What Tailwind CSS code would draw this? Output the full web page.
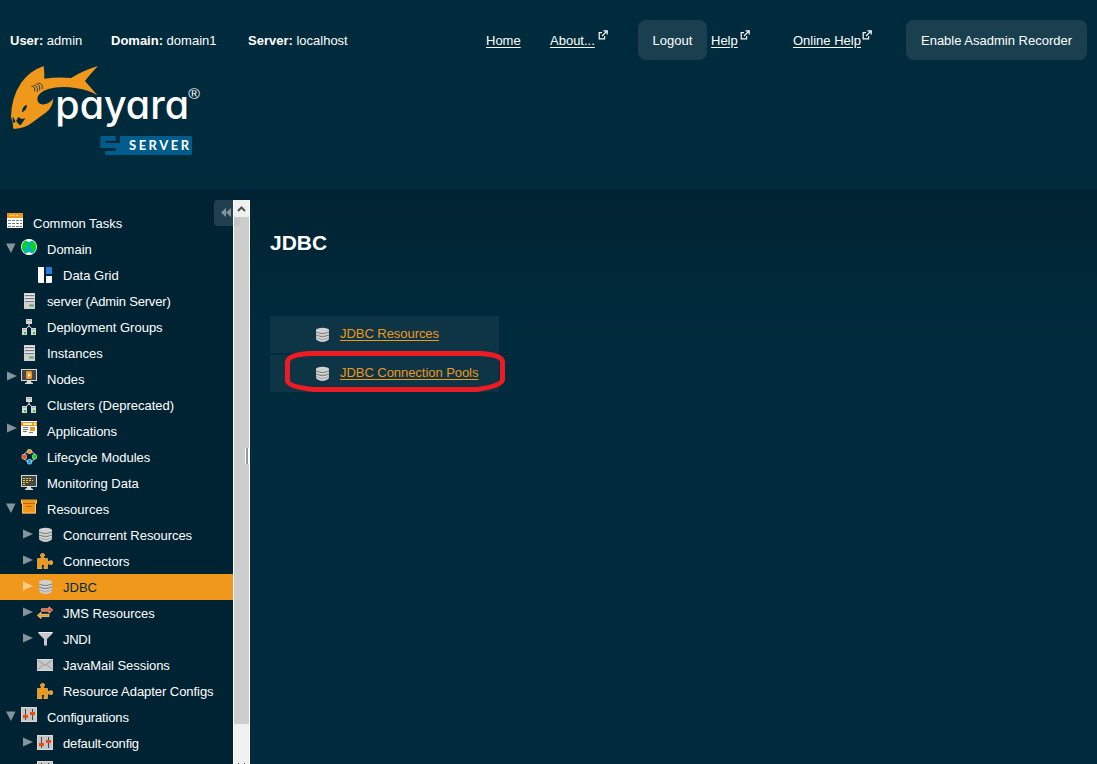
<!DOCTYPE html>
<html lang="en">
<head>
<meta charset="utf-8">
<title>Payara Server Console</title>
<script src="https://cdn.jsdelivr.net/npm/@tailwindcss/browser@4"></script>
</head>
<body class="w-[1097px] h-[764px] overflow-hidden bg-[#002b3c] text-white text-[13px] leading-[26px] font-['Liberation_Sans',Arial,sans-serif]">
<svg class="hidden" xmlns="http://www.w3.org/2000/svg">
  <symbol id="down" viewBox="0 0 10 10"><path d="M0 0.5h9.5L5 10z" fill="#869399"/></symbol>
  <symbol id="right" viewBox="0 0 10 10"><path d="M0 0.5v9L10 5z" fill="currentColor"/></symbol>
  <symbol id="tasks" viewBox="0 0 16 16"><path fill="#fff" d="M0 0h16v15H0z"/><path fill="#f0981b" d="M0 0h16v5H0z"/><path stroke="#ffd9a0" stroke-dasharray="2 1" d="M3 2.5h8"/><path stroke="#777" stroke-dasharray="3 1" d="M1 7.500h14M1 10.500h14M1 13.500h14"/></symbol>
  <symbol id="globe" viewBox="0 0 16 16"><circle cx="8" cy="8" r="8" fill="#fff"/><circle cx="8" cy="8" r="7.300" fill="#12a5dc"/><path fill="#00e000" d="M4 2l3 1-1 2 1 2-3 2 2 3v2l-3-2-2-4 1-3zM11 2l3 3 1 3-2 4-3 1 1-3-2-2 1-2-1-2z"/><path fill="#fff" d="M4.500 1.300Q8-.8 11.500 1.300L8 3zM4.500 14.700Q8 17 11.500 14.700L8 13z"/></symbol>
  <symbol id="grid" viewBox="0 0 16 16"><path fill="#fff" d="M1 0h6v16H2q-1 0-1-1zM9 9h6v6q0 1-1 1H9z"/><path fill="#2a7be0" d="M9 0h5q1 0 1 1v6H9z"/></symbol>
  <symbol id="server" viewBox="0 0 16 16"><path fill="#d0d0d0" d="M3 0h11v16H3z"/><path stroke="#777" d="M4 2.500h9M4 5.500h9M4 8.500h9"/><path stroke="#e8e8e8" d="M4 1.500h9M4 4.500h9M4 7.500h9"/><path fill="#aaa" d="M8 11h5v3H8z"/><path fill="#18d420" d="M9 12h3v1H9z"/></symbol>
  <symbol id="cluster" viewBox="0 0 16 16"><path fill="none" stroke="#e8e8e8" d="M8 5v2L3.500 11M8 7l4.500 4"/><path fill="#d6d6d6" d="M5 0h6v5H5zM1 9h5v7H1zM10 9h5v7h-5z"/><path stroke="#aaa" d="M6 1.500h4M2 10.500h3M11 10.500h3"/><path fill="#18d420" d="M3 13h2v2H3zM12 13h2v2h-2z"/></symbol>
  <symbol id="node" viewBox="0 0 16 16"><path fill="#d8d8d8" d="M0 0h16v12H0zM6 12h4v1l2 1v1H4v-1l2-1z"/><path fill="#464646" d="M1 1h14v10H1z"/><path fill="#f0981b" d="M6 2h4l1 1v6l-1 1H6L5 9V3z"/><path fill="#fff" d="M7 4l3 2-3 2z"/></symbol>
  <symbol id="app" viewBox="0 0 16 16"><path fill="#fff" d="M0 0h16v15H0z"/><path fill="#f0981b" d="M0 1h16v4H0zM9 6h5v4H9z"/><path stroke="#fff" stroke-width="2" d="M2 3h9M13 3h2"/><path stroke="#f0981b" stroke-width=".6" stroke-dasharray="1 1" d="M2 3h9"/><path stroke="#777" d="M2 6.500h5M2 8.500h5M2 10.500h4M8 11.500h4"/></symbol>
  <symbol id="life" viewBox="0 0 16 16"><circle cx="8.500" cy="7.500" r="5.500" fill="none" stroke="#ddd"/><g stroke="#fff" stroke-width=".5"><rect x="6.500" y=".5" width="4" height="4" rx="1" fill="#f0981b"/><rect x="1" y="5.500" width="4.500" height="4.500" rx="1" fill="#f04a1b"/><rect x="11.500" y="5.500" width="4" height="4.500" rx="1" fill="#08d41c"/><rect x="6.500" y="10.500" width="4" height="4.500" rx="1" fill="#12a5e8"/></g></symbol>
  <symbol id="monitor" viewBox="0 0 16 16"><path fill="#d8d8d8" d="M0 0h16v12H0zM6 12h4v1l2 1v1H4v-1l2-1z"/><path fill="#464646" d="M1 1h14v10H1z"/><path stroke="#f5d000" stroke-dasharray="2 1" d="M2 3.500h8M2 5.500h10M2 7.500h5M2 9.500h3"/></symbol>
  <symbol id="box" viewBox="0 0 16 16"><path fill="#f0981b" d="M0 .5h16v4H15v10H1v-10H0z"/><path fill="none" stroke="#ffd28a" d="M0.500 1v3h1v10h13V4h1V1" stroke-width=".8"/><path stroke="#b56a08" d="M2 4.500h12M5 7.500h6"/></symbol>
  <symbol id="db" viewBox="0 0 16 16"><path fill="#b5b5b5" d="M2 2.500v10Q8.500 17 15 12.500v-10z"/><ellipse cx="8.500" cy="3.300" rx="6.500" ry="2.500" fill="#d0d0d0"/><path fill="none" stroke="#777" d="M2.500 5.500Q8.500 8.500 14.500 5.500M2.500 8.500Q8.500 11.500 14.500 8.500"/><path fill="none" stroke="#e4e4e4" d="M2.500 6.500Q8.500 9.500 14.500 6.500M2.500 9.500Q8.500 12.500 14.500 9.500M3 12.500Q8.500 16 14 12.500"/></symbol>
  <symbol id="puzzle" viewBox="0 0 16 16"><path fill="#f0981b" stroke="#ffcf7d" stroke-width=".6" d="M.5 5.500h3.700V3.800L3.500 3V1.500L4.800.5h1.700l1 1V3l-.8.800v1.700h3.800v3h1.500l1-.8h2l1 1v1.800l-1 1h-2l-1-.7h-1.500v4.900H7v-2l.5-1-.8-1.200H5L4.200 13l.6 1v2H.5z"/></symbol>
  <symbol id="jms" viewBox="0 0 16 16"><path fill="#f04a1b" stroke="#ffe3c8" stroke-width=".7" d="M4.500 3.800h7.500V1.800L15.700 5l-3.700 3.200V6.200H4.500z"/><path fill="#f0981b" stroke="#ffe3a8" stroke-width=".7" d="M12 9.300H4V7.200L.3 10.400 4 13.600v-2h8z"/></symbol>
  <symbol id="funnel" viewBox="0 0 16 16"><path fill="#c8c8c8" d="M1.500 1h14v1.500L10 8v6.500H7V8L1.500 2.500z"/><path fill="#eee" d="M1.500 1h14v1h-14z"/></symbol>
  <symbol id="mail" viewBox="0 0 16 16"><path fill="#c8c8c8" d="M0 2h16v12H0z"/><path fill="none" stroke="#888" stroke-width=".8" d="M1 3l7 5.500L15 3M1 12.500l5-5M15 12.500l-5-5"/><path stroke="#ddd" d="M0 2.500h16M0 13.500h16"/></symbol>
  <symbol id="config" viewBox="0 0 16 16"><path fill="#d8d8d8" d="M0 0h16v15H0z"/><path fill="#c4c4c4" d="M1 1h14v13H1z"/><path stroke="#444" d="M4.500 2v11M11.500 2v11"/><path fill="#f04a0a" d="M2 8h5v3H2zM9 5h5v3H9z"/></symbol>
  <symbol id="ext" viewBox="0 0 10 10"><path fill="none" stroke="#fff" stroke-width="1.200" d="M4 2.600H1.200v6.200h5.400V6M4 6L8.700 1.300M5.500.8h3.700v3.700"/></symbol>
</svg>

<header class="h-[190px] bg-[#002b3c]">
  <div class="flex h-[55px] pt-5 leading-[42px]">
    <div class="w-[101px] ml-[10px]"><b>User:</b> admin</div>
    <div class="w-[137px]"><b>Domain:</b> domain1</div>
    <div class="w-[238px]"><b>Server:</b> localhost</div>
    <a class="w-[64px] underline underline-offset-2">Home</a>
    <a class="w-[88px] flex"><span class="underline underline-offset-2">About...</span><svg class="w-[10px] h-[10px] mt-[10px] ml-[3px]"><use href="#ext"/></svg></a>
    <button class="w-[69px] h-[40px] pt-[2px] leading-[38px] rounded-lg bg-[#1a4050]">Logout</button>
    <a class="w-[82px] ml-1 flex"><span class="underline underline-offset-2">Help</span><svg class="w-[10px] h-[10px] mt-[10px] ml-[2px]"><use href="#ext"/></svg></a>
    <a class="w-[113px] flex"><span class="underline underline-offset-2">Online Help</span><svg class="w-[10px] h-[10px] mt-[10px] ml-px"><use href="#ext"/></svg></a>
    <button class="w-[181px] h-[40px] pt-[2px] leading-[38px] rounded-lg bg-[#1a4050] whitespace-nowrap">Enable Asadmin Recorder</button>
  </div>
  <svg class="w-[220px] h-[110px]" viewBox="0 0 660 330">
    <path fill="#f0981b" d="M131 33Q134 52 133 71Q175 65 213 69Q250 46 294 33Q270 58 255 78Q271 96 292 121Q265 105 230 100Q182 91 145 102Q112 113 112 132Q112 150 133 148Q153 144 160 130Q159 158 137 173Q118 186 98 202Q74 222 40 221L38 203L33 186Q34 128 63 84Q88 48 131 33z"/>
    <path fill="#002b3c" d="M66 167Q69 152 81 150Q81 166 66 172zM38 184L47 200L55 186L65 192L76 190L62 211L48 209L38 201z"/>
    <path fill="#f0981b" d="M41 204L49 198L55 207L62 211L50 220L41 220z"/>
    <path fill="none" stroke="#002b3c" stroke-width="2.500" d="M94 94Q106 92 104 109M101 90Q114 91 112 110M108 86Q121 88 119 106M115 84Q129 85 127 102"/>
    <text x="166" y="193" font-family="Inter, Lato, sans-serif" font-weight="500" font-size="117" textLength="401" lengthAdjust="spacingAndGlyphs" fill="#fff" style="font-feature-settings:'cv11' 1">payara</text>
    <text x="565" y="131" font-family="Liberation Sans, sans-serif" font-size="42" textLength="35" lengthAdjust="spacingAndGlyphs" fill="#fff">®</text>
    <path fill="#005c8a" d="M304 243H347V257H316V264H360V243H573Q576 243 576 246V297Q576 300 573 300H318Q315 300 315 297V288H347V279H304Q301 279 301 276V246Q301 243 304 243z"/>
    <text x="387" y="286" font-family="Lato, sans-serif" font-weight="700" font-size="39" textLength="180" fill="#fff">SERVER</text>
  </svg>
</header>

<div class="flex h-[574px]">
  <aside class="relative w-[250px] flex bg-[#002333] pt-[10px]">
    <div class="absolute left-[214px] top-[10px] w-[26px] h-[26px] rounded bg-[#21404f]">
      <svg class="w-[20px] h-[26px]" viewBox="0 0 20 26"><path fill="#84939b" d="M12 8v9l-5-4.500zM17 8v9l-5-4.500z"/></svg>
    </div>
    <nav class="w-[233px] h-[564px] pt-[10px] overflow-hidden whitespace-nowrap leading-[28px] text-[#869399]">
      <div class="flex h-[26px] pl-[7px]"><svg class="w-4 h-4 mt-[3px] mr-[10px]"><use href="#tasks"/></svg><span class="text-white">Common Tasks</span></div>
      <div class="flex h-[26px] pl-[6px]"><svg class="w-[10px] h-[10px] mt-[7px] mr-[5px]"><use href="#down"/></svg><svg class="w-4 h-4 mt-[3px] mr-[10px]"><use href="#globe"/></svg><span class="text-white">Domain</span></div>
      <div class="flex h-[26px] pl-[37px]"><svg class="w-4 h-4 mt-[5px] mr-[10px]"><use href="#grid"/></svg><span class="text-white">Data Grid</span></div>
      <div class="flex h-[26px] pl-[21px]"><svg class="w-4 h-4 mt-[5px] mr-[10px]"><use href="#server"/></svg><span class="text-white tracking-[-0.17px]">server (Admin Server)</span></div>
      <div class="flex h-[26px] pl-[21px]"><svg class="w-4 h-4 mt-[5px] mr-[10px]"><use href="#cluster"/></svg><span class="text-white">Deployment Groups</span></div>
      <div class="flex h-[26px] pl-[21px]"><svg class="w-4 h-4 mt-[5px] mr-[10px]"><use href="#server"/></svg><span class="text-white">Instances</span></div>
      <div class="flex h-[26px] pl-[7px]"><svg class="w-[10px] h-[10px] mt-[5px] mr-1"><use href="#right"/></svg><svg class="w-4 h-4 mt-[3px] mr-[10px]"><use href="#node"/></svg><span class="text-white">Nodes</span></div>
      <div class="flex h-[26px] pl-[21px]"><svg class="w-4 h-4 mt-[5px] mr-[10px]"><use href="#cluster"/></svg><span class="text-white">Clusters (Deprecated)</span></div>
      <div class="flex h-[26px] pl-[7px]"><svg class="w-[10px] h-[10px] mt-[5px] mr-1"><use href="#right"/></svg><svg class="w-4 h-4 mt-[3px] mr-[10px]"><use href="#app"/></svg><span class="text-white">Applications</span></div>
      <div class="flex h-[26px] pl-[21px]"><svg class="w-4 h-4 mt-[5px] mr-[10px]"><use href="#life"/></svg><span class="text-white">Lifecycle Modules</span></div>
      <div class="flex h-[26px] pl-[21px]"><svg class="w-4 h-4 mt-[5px] mr-[10px]"><use href="#monitor"/></svg><span class="text-white">Monitoring Data</span></div>
      <div class="flex h-[26px] pl-[6px]"><svg class="w-[10px] h-[10px] mt-[7px] mr-[5px]"><use href="#down"/></svg><svg class="w-4 h-4 mt-[3px] mr-[10px]"><use href="#box"/></svg><span class="text-white">Resources</span></div>
      <div class="flex h-[26px] pl-[23px]"><svg class="w-[10px] h-[10px] mt-[7px] mr-1"><use href="#right"/></svg><svg class="w-4 h-4 mt-[5px] mr-[10px]"><use href="#db"/></svg><span class="text-white tracking-[-0.05px]">Concurrent Resources</span></div>
      <div class="flex h-[26px] pl-[23px]"><svg class="w-[10px] h-[10px] mt-[7px] mr-1"><use href="#right"/></svg><svg class="w-4 h-4 mt-[5px] mr-[10px]"><use href="#puzzle"/></svg><span class="text-white">Connectors</span></div>
      <div class="flex h-[26px] pl-[23px] bg-[#f0981b] text-[#f9cc88]"><svg class="w-[10px] h-[10px] mt-[7px] mr-1"><use href="#right"/></svg><svg class="w-4 h-4 mt-[5px] mr-[10px]"><use href="#db"/></svg><span class="text-[#002b3c]">JDBC</span></div>
      <div class="flex h-[26px] pl-[23px]"><svg class="w-[10px] h-[10px] mt-[7px] mr-1"><use href="#right"/></svg><svg class="w-4 h-4 mt-[5px] mr-[10px]"><use href="#jms"/></svg><span class="text-white">JMS Resources</span></div>
      <div class="flex h-[26px] pl-[23px]"><svg class="w-[10px] h-[10px] mt-[7px] mr-1"><use href="#right"/></svg><svg class="w-4 h-4 mt-[5px] mr-[10px]"><use href="#funnel"/></svg><span class="text-white tracking-[-0.3px]">JNDI</span></div>
      <div class="flex h-[26px] pl-[37px]"><svg class="w-4 h-4 mt-[5px] mr-[10px]"><use href="#mail"/></svg><span class="text-white tracking-[-0.05px]">JavaMail Sessions</span></div>
      <div class="flex h-[26px] pl-[37px]"><svg class="w-4 h-4 mt-[5px] mr-[10px]"><use href="#puzzle"/></svg><span class="text-white tracking-[-0.05px]">Resource Adapter Configs</span></div>
      <div class="flex h-[26px] pl-[6px]"><svg class="w-[10px] h-[10px] mt-[7px] mr-[5px]"><use href="#down"/></svg><svg class="w-4 h-4 mt-[3px] mr-[10px]"><use href="#config"/></svg><span class="text-white tracking-[-0.15px]">Configurations</span></div>
      <div class="flex h-[26px] pl-[23px]"><svg class="w-[10px] h-[10px] mt-[7px] mr-1"><use href="#right"/></svg><svg class="w-4 h-4 mt-[5px] mr-[10px]"><use href="#config"/></svg><span class="text-white tracking-[-0.15px]">default-config</span></div>
      <div class="flex h-[26px] pl-[37px]"><svg class="w-4 h-4 mt-[5px]"><use href="#config"/></svg></div>
    </nav>
    <div class="relative w-[17px] h-[564px] border-x border-white bg-[#f0f0f0]">
      <svg class="block w-[15px] h-[17px]" viewBox="0 0 15 17"><path fill="none" stroke="#505050" stroke-width="2" d="M4 11l3.500-3.500L11 11"/></svg>
      <div class="h-[507px] bg-[#cdcdcd]"></div>
      <div class="absolute left-0 top-[17px] w-[6px] h-[9px] rounded-br bg-[#c4c5c6]"></div>
      <div class="absolute left-[11px] top-[248px] w-[4px] h-4 border-x border-white bg-[#999]"></div>
      <svg class="absolute left-0 bottom-0 w-[15px] h-px"><path fill="#505050" d="M4 0h1v1H4zM10 0h1v1h-1z"/></svg>
    </div>
  </aside>
  <main class="flex-1 pl-5 pt-[39px] bg-linear-to-b from-[#002333] to-[#002b3c] to-[140px]">
    <h1 class="text-[21px] leading-[28px] font-bold">JDBC</h1>
    <div class="relative mt-[59px] w-[229px] flex flex-col gap-[2px] leading-[36px]">
      <div class="flex h-[37px] pl-[44px] bg-[#0d3545]"><svg class="w-4 h-4 mt-[11px] mr-[10px]"><use href="#db"/></svg><a class="underline underline-offset-2 text-[#f0981b] tracking-[-0.05px]">JDBC Resources</a></div>
      <div class="flex h-[37px] pl-[44px] bg-[#0d3545]"><svg class="w-4 h-4 mt-[11px] mr-[10px]"><use href="#db"/></svg><a class="underline underline-offset-2 text-[#f0981b] tracking-[-0.05px]">JDBC Connection Pools</a></div>
      <svg class="absolute left-[15px] top-[35px] w-[220px] h-[41px]" viewBox="0 0 220 41"><path fill="none" stroke="#ed1c24" stroke-width="5" d="M24 2.500H196Q217.500 4 217.500 11V29Q216 35 192 38.500H29Q4 36 2.500 30V11Q3 4 24 2.500z"/></svg>
    </div>
  </main>
</div>
</body>
</html>
